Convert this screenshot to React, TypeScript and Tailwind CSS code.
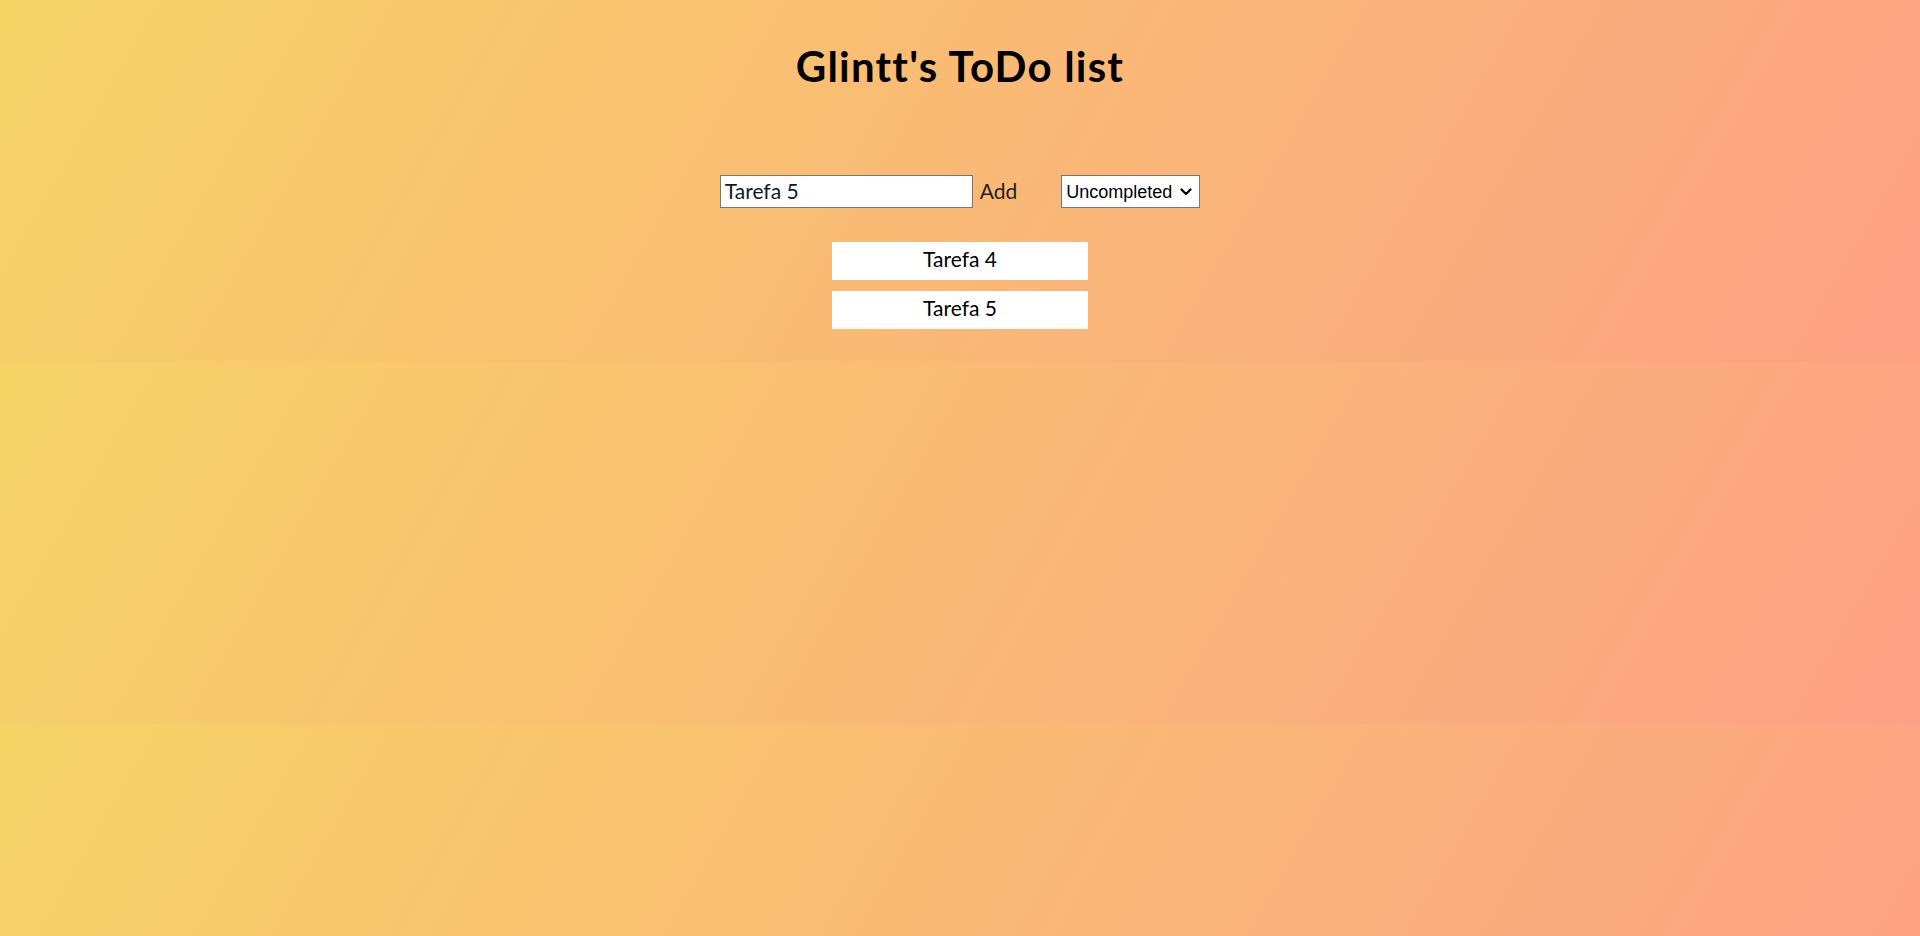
import { useState } from "react";

const font = { fontFamily: "Lato, 'Open Sans', sans-serif" };

export default function App() {
  const [text, setText] = useState("Tarefa 5");
  const todos = ["Tarefa 4", "Tarefa 5"];

  return (
    <div
      className="min-h-[936px] w-full bg-[linear-gradient(120deg,#f6d365,#fda085)] bg-[length:100%_362px] bg-repeat text-black"
      style={font}
    >
      <header className="flex justify-center pt-[40px]">
        <h1 className="text-[42px] font-bold leading-[52px] tracking-[1.2px]">Glintt's ToDo list</h1>
      </header>

      <form className="mt-[83px] flex h-[33px] items-center justify-center" onSubmit={(e) => e.preventDefault()}>
        <input
          value={text}
          onChange={(e) => setText(e.target.value)}
          className="h-[33px] w-[253px] border border-[#767676] bg-white px-[4px] pb-[3px] text-[21px] text-[#111827] outline-none"
        />
        <button type="submit" className="ml-[7px] h-[33px] pb-[3px] text-[21px] leading-none text-[#1f1f1f]">
          Add
        </button>
        <div className="ml-[44px] flex h-[33px] w-[139px] items-center border border-[#767676] bg-white pl-[4px]">
          <span className="text-[18px] leading-none" style={{ fontFamily: "'Liberation Sans', Arial, sans-serif" }}>
            Uncompleted
          </span>
          <svg className="ml-[8px]" width="12" height="8" viewBox="0 0 12 8" fill="none">
            <path d="M1.5 1.5l4.5 4.5 4.5-4.5" stroke="#000" strokeWidth="2.2" strokeLinecap="round" strokeLinejoin="round" />
          </svg>
        </div>
      </form>

      <ul className="mt-[34px] flex flex-col items-center gap-[11px]">
        {todos.map((t) => (
          <li key={t} className="flex h-[38px] w-[256px] items-center justify-center bg-white pb-[4px] text-[21px]">
            {t}
          </li>
        ))}
      </ul>
    </div>
  );
}
